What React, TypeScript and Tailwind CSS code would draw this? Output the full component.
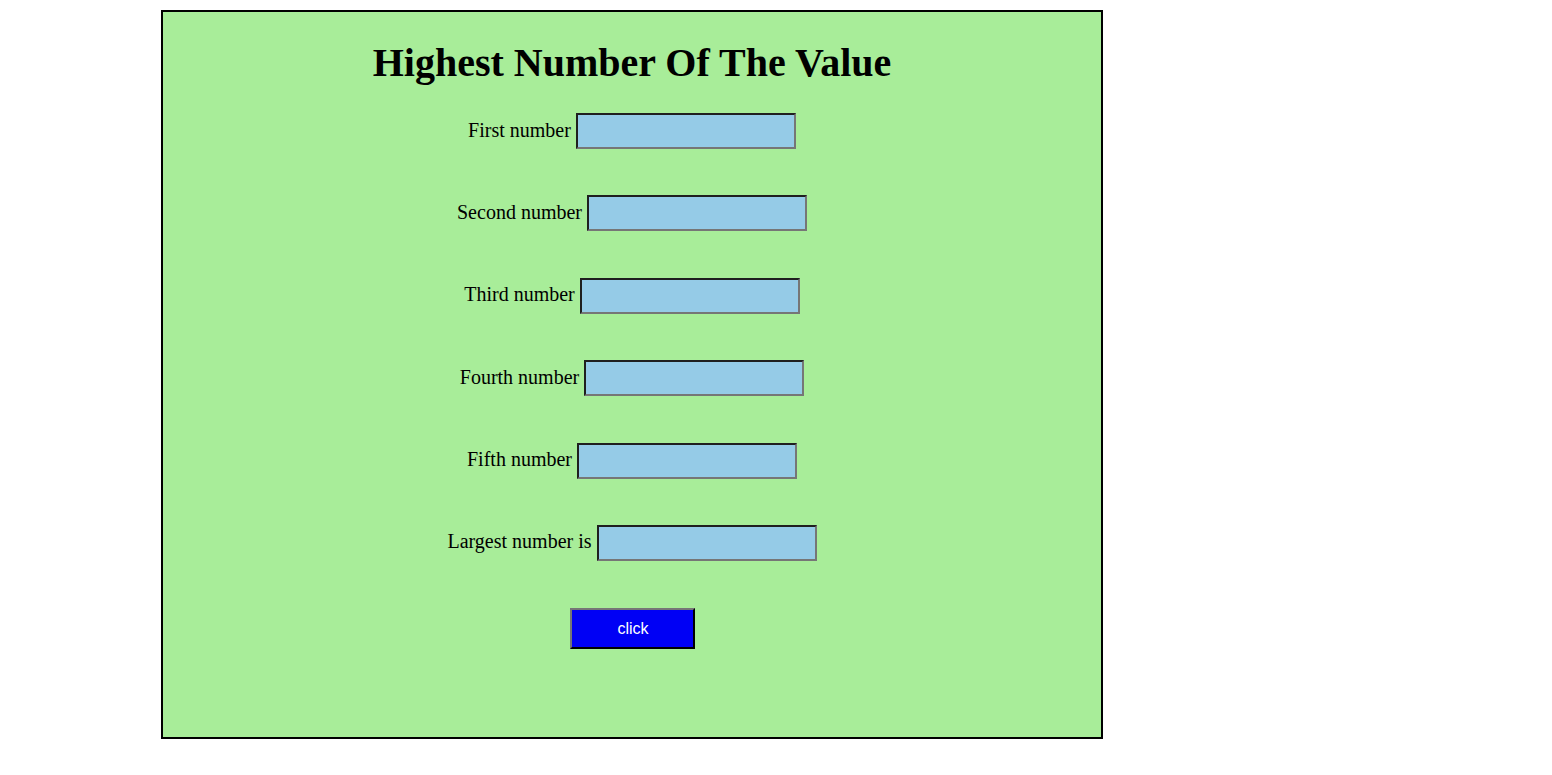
import React from "react";

const rows = [
  "First number",
  "Second number",
  "Third number",
  "Fourth number",
  "Fifth number",
  "Largest number is",
];

export default function App() {
  return (
    <div className="min-h-screen bg-white pt-[10px] pl-[161px]" style={{ fontFamily: '"Liberation Serif", "Times New Roman", serif' }}>
      <div className="w-[942px] h-[729px] border-2 border-black bg-[#a8ed99] flex flex-col items-center pt-[28px]">
        <h1 className="text-[40px] leading-[46px] font-bold text-black" style={{ fontFamily: '"Liberation Serif", "Times New Roman", serif' }}>
          Highest Number Of The Value
        </h1>
        <div className="flex flex-col items-center gap-[46.4px] mt-[27px]">
          {rows.map((r) => (
            <div key={r} className="flex items-center">
              <span className="text-[20px] leading-[23px] text-black mr-[5px] mb-[2px]">{r}</span>
              <input
                type="text"
                className="w-[220px] h-[36px] bg-[#95cbe7] border-2 border-t-[#1f1f1f] border-l-[#1f1f1f] border-r-[#767676] border-b-[#767676] outline-none"
              />
            </div>
          ))}
          <button
            className="w-[125px] h-[41px] mt-[1px] ml-[2px] bg-[#0000f5] text-white text-[16px] border-2 border-t-[#767676] border-l-[#767676] border-r-black border-b-black"
            style={{ fontFamily: '"Liberation Sans", Arial, sans-serif' }}
          >
            click
          </button>
        </div>
      </div>
    </div>
  );
}
